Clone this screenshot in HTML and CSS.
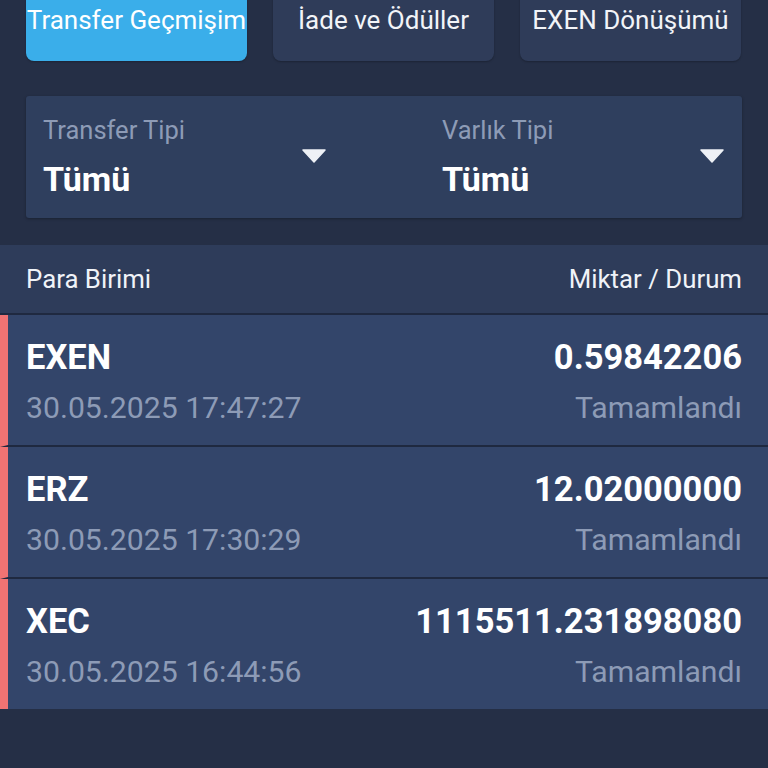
FILE: index.html
```html
<!DOCTYPE html>
<html lang="tr">
<head>
<meta charset="utf-8">
<link rel="stylesheet" href="styles.css">
</head>
<body>
<div class="page">
  <div class="tabs">
    <div class="tab active">Transfer Geçmişim</div>
    <div class="tab">İade ve Ödüller</div>
    <div class="tab">EXEN Dönüşümü</div>
  </div>
  <div class="filters">
    <div class="filter">
      <div class="ftext">
        <div class="flabel">Transfer Tipi</div>
        <div class="fvalue">Tümü</div>
      </div>
      <svg class="caret" width="24" height="14" viewBox="0 0 24 14"><path d="M1 1 H23 L12 13 Z" fill="#eef1f6" stroke="#eef1f6" stroke-width="1.5" stroke-linejoin="round"/></svg>
    </div>
    <div class="filter">
      <div class="ftext">
        <div class="flabel">Varlık Tipi</div>
        <div class="fvalue">Tümü</div>
      </div>
      <svg class="caret" width="24" height="14" viewBox="0 0 24 14"><path d="M1 1 H23 L12 13 Z" fill="#eef1f6" stroke="#eef1f6" stroke-width="1.5" stroke-linejoin="round"/></svg>
    </div>
  </div>
  <div class="table">
    <div class="thead">
      <span>Para Birimi</span>
      <span>Miktar / Durum</span>
    </div>
    <div class="row">
      <div class="line"><span class="coin">EXEN</span><span class="amount">0.59842206</span></div>
      <div class="line sub"><span>30.05.2025 17:47:27</span><span>Tamamlandı</span></div>
    </div>
    <div class="row">
      <div class="line"><span class="coin">ERZ</span><span class="amount">12.02000000</span></div>
      <div class="line sub"><span>30.05.2025 17:30:29</span><span>Tamamlandı</span></div>
    </div>
    <div class="row">
      <div class="line"><span class="coin">XEC</span><span class="amount">1115511.231898080</span></div>
      <div class="line sub"><span>30.05.2025 16:44:56</span><span>Tamamlandı</span></div>
    </div>
  </div>
</div>
</body>
</html>
```
FILE: styles.css
```css
* { box-sizing: border-box; }
html, body { margin: 0; padding: 0; }
body {
  background: #252f46;
  font-family: Roboto, "Noto Sans", sans-serif;
  color: #ffffff;
  width: 768px;
  height: 768px;
  overflow: hidden;
}
.page { display: flex; flex-direction: column; }
.tabs {
  display: grid;
  grid-template-columns: 221px 221px 221px;
  column-gap: 26px;
  padding: 0 26px;
  margin-top: -21px;
}
.tab {
  height: 82px;
  border-radius: 8px;
  background: #2f3c59;
  display: flex;
  align-items: center;
  justify-content: center;
  font-size: 26px;
  color: #f2f4f8;
  white-space: nowrap;
  box-shadow: 0 1px 2px rgba(0,0,0,0.25);
}
.tab.active { background: #3aaeea; color: #ffffff; }
.filters {
  margin: 35px 26px 0;
  height: 122px;
  background: #2f3f5e;
  border-radius: 3px;
  box-shadow: 0 1px 3px rgba(0,0,0,0.3);
  display: grid;
  grid-template-columns: 283px 282px;
  column-gap: 116px;
  padding: 0 17px;
  align-items: center;
}
.filter { display: flex; justify-content: space-between; align-items: center; }
.ftext { display: flex; flex-direction: column; }
.flabel { font-size: 25.5px; color: #8d9bb6; line-height: 30px; }
.fvalue { font-size: 34px; font-weight: 700; color: #ffffff; line-height: 40px; margin-top: 14px; }
.caret { margin-top: -2px; }
.table { margin-top: 27px; display: flex; flex-direction: column; }
.thead {
  height: 70px;
  background: #2e3c5a;
  display: flex;
  justify-content: space-between;
  align-items: center;
  padding: 0 26px;
  font-size: 25.8px;
  color: #f0f3f8;
  border-bottom: 2px solid #1f2940;
}
.row {
  height: 132px;
  background: #33456a;
  border-left: 8px solid #f07373;
  border-bottom: 2px solid #1f2940;
  padding: 22px 26px 0 18px;
  display: flex;
  flex-direction: column;
}
.row:last-child { border-bottom: none; height: 130px; }
.line { display: flex; justify-content: space-between; align-items: baseline; }
.coin, .amount { font-size: 34.5px; font-weight: 700; color: #ffffff; line-height: 40px; }
.sub { margin-top: 14px; font-size: 30.2px; color: #8d9bb6; line-height: 34px; }
```
